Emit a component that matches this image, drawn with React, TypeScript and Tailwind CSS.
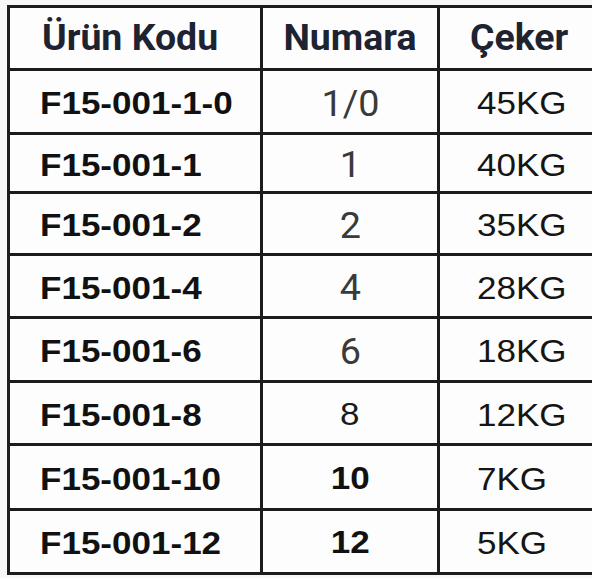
import React from "react";

type Row = {
  code: string;
  num: string;
  numStyle: "roboto" | "plain" | "bold";
  ceker: string;
  h: string;
};

const rows: Row[] = [
  { code: "F15-001-1-0", num: "1/0", numStyle: "roboto", ceker: "45KG", h: "h-[64px]" },
  { code: "F15-001-1", num: "1", numStyle: "roboto", ceker: "40KG", h: "h-[59px]" },
  { code: "F15-001-2", num: "2", numStyle: "roboto", ceker: "35KG", h: "h-[62px]" },
  { code: "F15-001-4", num: "4", numStyle: "roboto", ceker: "28KG", h: "h-[63px]" },
  { code: "F15-001-6", num: "6", numStyle: "roboto", ceker: "18KG", h: "h-[64px]" },
  { code: "F15-001-8", num: "8", numStyle: "plain", ceker: "12KG", h: "h-[63px]" },
  { code: "F15-001-10", num: "10", numStyle: "bold", ceker: "7KG", h: "h-[65px]" },
  { code: "F15-001-12", num: "12", numStyle: "bold", ceker: "5KG", h: "h-[64px]" },
];

const numClass = {
  roboto: "font-['Roboto',sans-serif] text-[37px] text-[#3a3a3a] scale-x-[1.02]",
  plain: "font-['Liberation_Sans',Arial,sans-serif] text-[31px] text-[#1a1a1a] scale-x-[1.13]",
  bold: "font-['Liberation_Sans',Arial,sans-serif] font-bold text-[31px] text-[#111] scale-x-[1.13]",
};

const cell = "border-[3px] border-[#1c1c1c] p-0 align-middle";

export default function App() {
  return (
    <div className="w-[592px] h-[578px] overflow-hidden bg-[#f6f6f6] pt-[5px] pl-[7px]">
      <table className="border-collapse bg-[#fdfdfd] table-fixed w-[600px]">
        <colgroup>
          <col className="w-[253px]" />
          <col className="w-[177px]" />
          <col className="w-[170px]" />
        </colgroup>
        <thead>
          <tr className="h-[63px]">
            <th className={`${cell} text-left pl-[32px]`}>
              <span className="inline-block origin-left scale-x-[1.04] font-['Roboto',sans-serif] font-bold text-[36px] leading-none text-[#1d2331]">
                Ürün Kodu
              </span>
            </th>
            <th className={`${cell} text-center`}>
              <span className="inline-block scale-x-[1.04] font-['Roboto',sans-serif] font-bold text-[36px] leading-none text-[#1d2331]">
                Numara
              </span>
            </th>
            <th className={`${cell} text-left pl-[30px]`}>
              <span className="inline-block origin-left scale-x-[1.04] font-['Roboto',sans-serif] font-bold text-[36px] leading-none text-[#1d2331]">
                Çeker
              </span>
            </th>
          </tr>
        </thead>
        <tbody>
          {rows.map((r) => (
            <tr key={r.code} className={r.h}>
              <td className={`${cell} pl-[30px] pt-[5px]`}>
                <span className="inline-block origin-left scale-x-[1.13] font-['Liberation_Sans',Arial,sans-serif] font-bold text-[31px] leading-none text-[#111]">
                  {r.code}
                </span>
              </td>
              <td className={`${cell} text-center pt-[3px]`}>
                <span className={`inline-block leading-none ${numClass[r.numStyle]}`}>{r.num}</span>
              </td>
              <td className={`${cell} pl-[37px] pt-[5px]`}>
                <span className="inline-block origin-left scale-x-[1.13] font-['Liberation_Sans',Arial,sans-serif] text-[31px] leading-none text-[#151515]">
                  {r.ceker}
                </span>
              </td>
            </tr>
          ))}
        </tbody>
      </table>
    </div>
  );
}
